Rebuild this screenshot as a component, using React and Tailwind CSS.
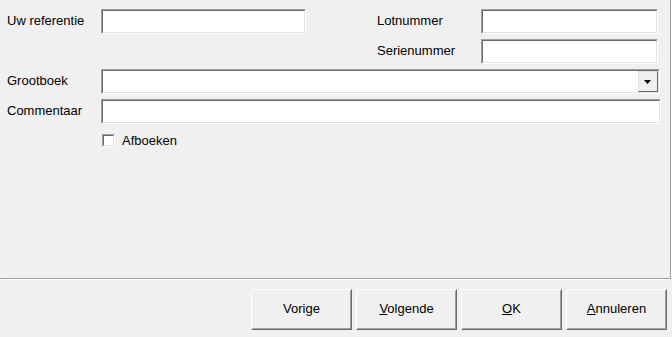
import React from 'react';

const font = { fontFamily: '"Liberation Sans", Arial, sans-serif' };

const Sunken = ({ className = '', children }) => (
  <div className={`border border-t-[#a0a0a0] border-l-[#a0a0a0] border-b-white border-r-white ${className}`}>
    <div className="h-full w-full border border-t-[#696969] border-l-[#696969] border-b-[#e3e3e3] border-r-[#e3e3e3] bg-white flex items-center justify-end">
      {children}
    </div>
  </div>
);

const Label = ({ className = '', children }) => (
  <div className={`text-[13px] leading-none text-black pb-[2px] ${className}`}>{children}</div>
);

const Button = ({ children }) => (
  <button className="w-[101px] h-[41px] border border-t-white border-l-white border-b-[#696969] border-r-[#696969] bg-[#f0f0f0] text-[13px] text-black">
    <div className="h-full w-full border border-t-[#f0f0f0] border-l-[#f0f0f0] border-b-[#a0a0a0] border-r-[#a0a0a0] flex items-center justify-center pb-[1px]">
      {children}
    </div>
  </button>
);

export default function App() {
  return (
    <div className="w-[672px] h-[337px] bg-[#f0f0f0] overflow-hidden flex flex-col" style={font}>
      {/* Form panel */}
      <div className="w-[671px] h-[279px] border-r border-b border-[#a0a0a0] shadow-[1px_1px_0_#ffffff] pt-[9px] pl-[7px] flex flex-col gap-[5px]">
        <div className="flex items-center h-[25px]">
          <Label className="w-[94px]">Uw referentie</Label>
          <Sunken className="w-[205px] h-[25px]" />
          <Label className="ml-[71px] w-[104px]">Lotnummer</Label>
          <Sunken className="w-[177px] h-[25px]" />
        </div>
        <div className="flex items-center h-[25px]">
          <Label className="ml-[370px] w-[104px]">Serienummer</Label>
          <Sunken className="w-[177px] h-[25px]" />
        </div>
        <div className="flex items-center h-[25px]">
          <Label className="w-[94px]">Grootboek</Label>
          <Sunken className="w-[559px] h-[25px]">
            <div className="w-[20px] h-[21px] border border-t-[#e3e3e3] border-l-[#e3e3e3] border-b-[#696969] border-r-[#696969] bg-[#f0f0f0] flex items-center justify-center">
              <svg width="8" height="4" viewBox="0 0 8 4">
                <path d="M0 0H7L3.5 4Z" fill="#000" />
              </svg>
            </div>
          </Sunken>
        </div>
        <div className="flex items-center h-[25px]">
          <Label className="w-[94px]">Commentaar</Label>
          <Sunken className="w-[560px] h-[25px]" />
        </div>
        <div className="flex items-center ml-[95px] mt-[5px] gap-[7px]">
          <Sunken className="w-[13px] h-[13px]" />
          <span className="text-[13px] leading-none text-black">Afboeken</span>
        </div>
      </div>

      {/* Buttons */}
      <div className="flex justify-end gap-[4px] pr-[5px] pt-[10px]">
        <Button>Vorige</Button>
        <Button><span><span className="underline">V</span>olgende</span></Button>
        <Button><span><span className="underline">O</span>K</span></Button>
        <Button><span><span className="underline">A</span>nnuleren</span></Button>
      </div>
    </div>
  );
}
